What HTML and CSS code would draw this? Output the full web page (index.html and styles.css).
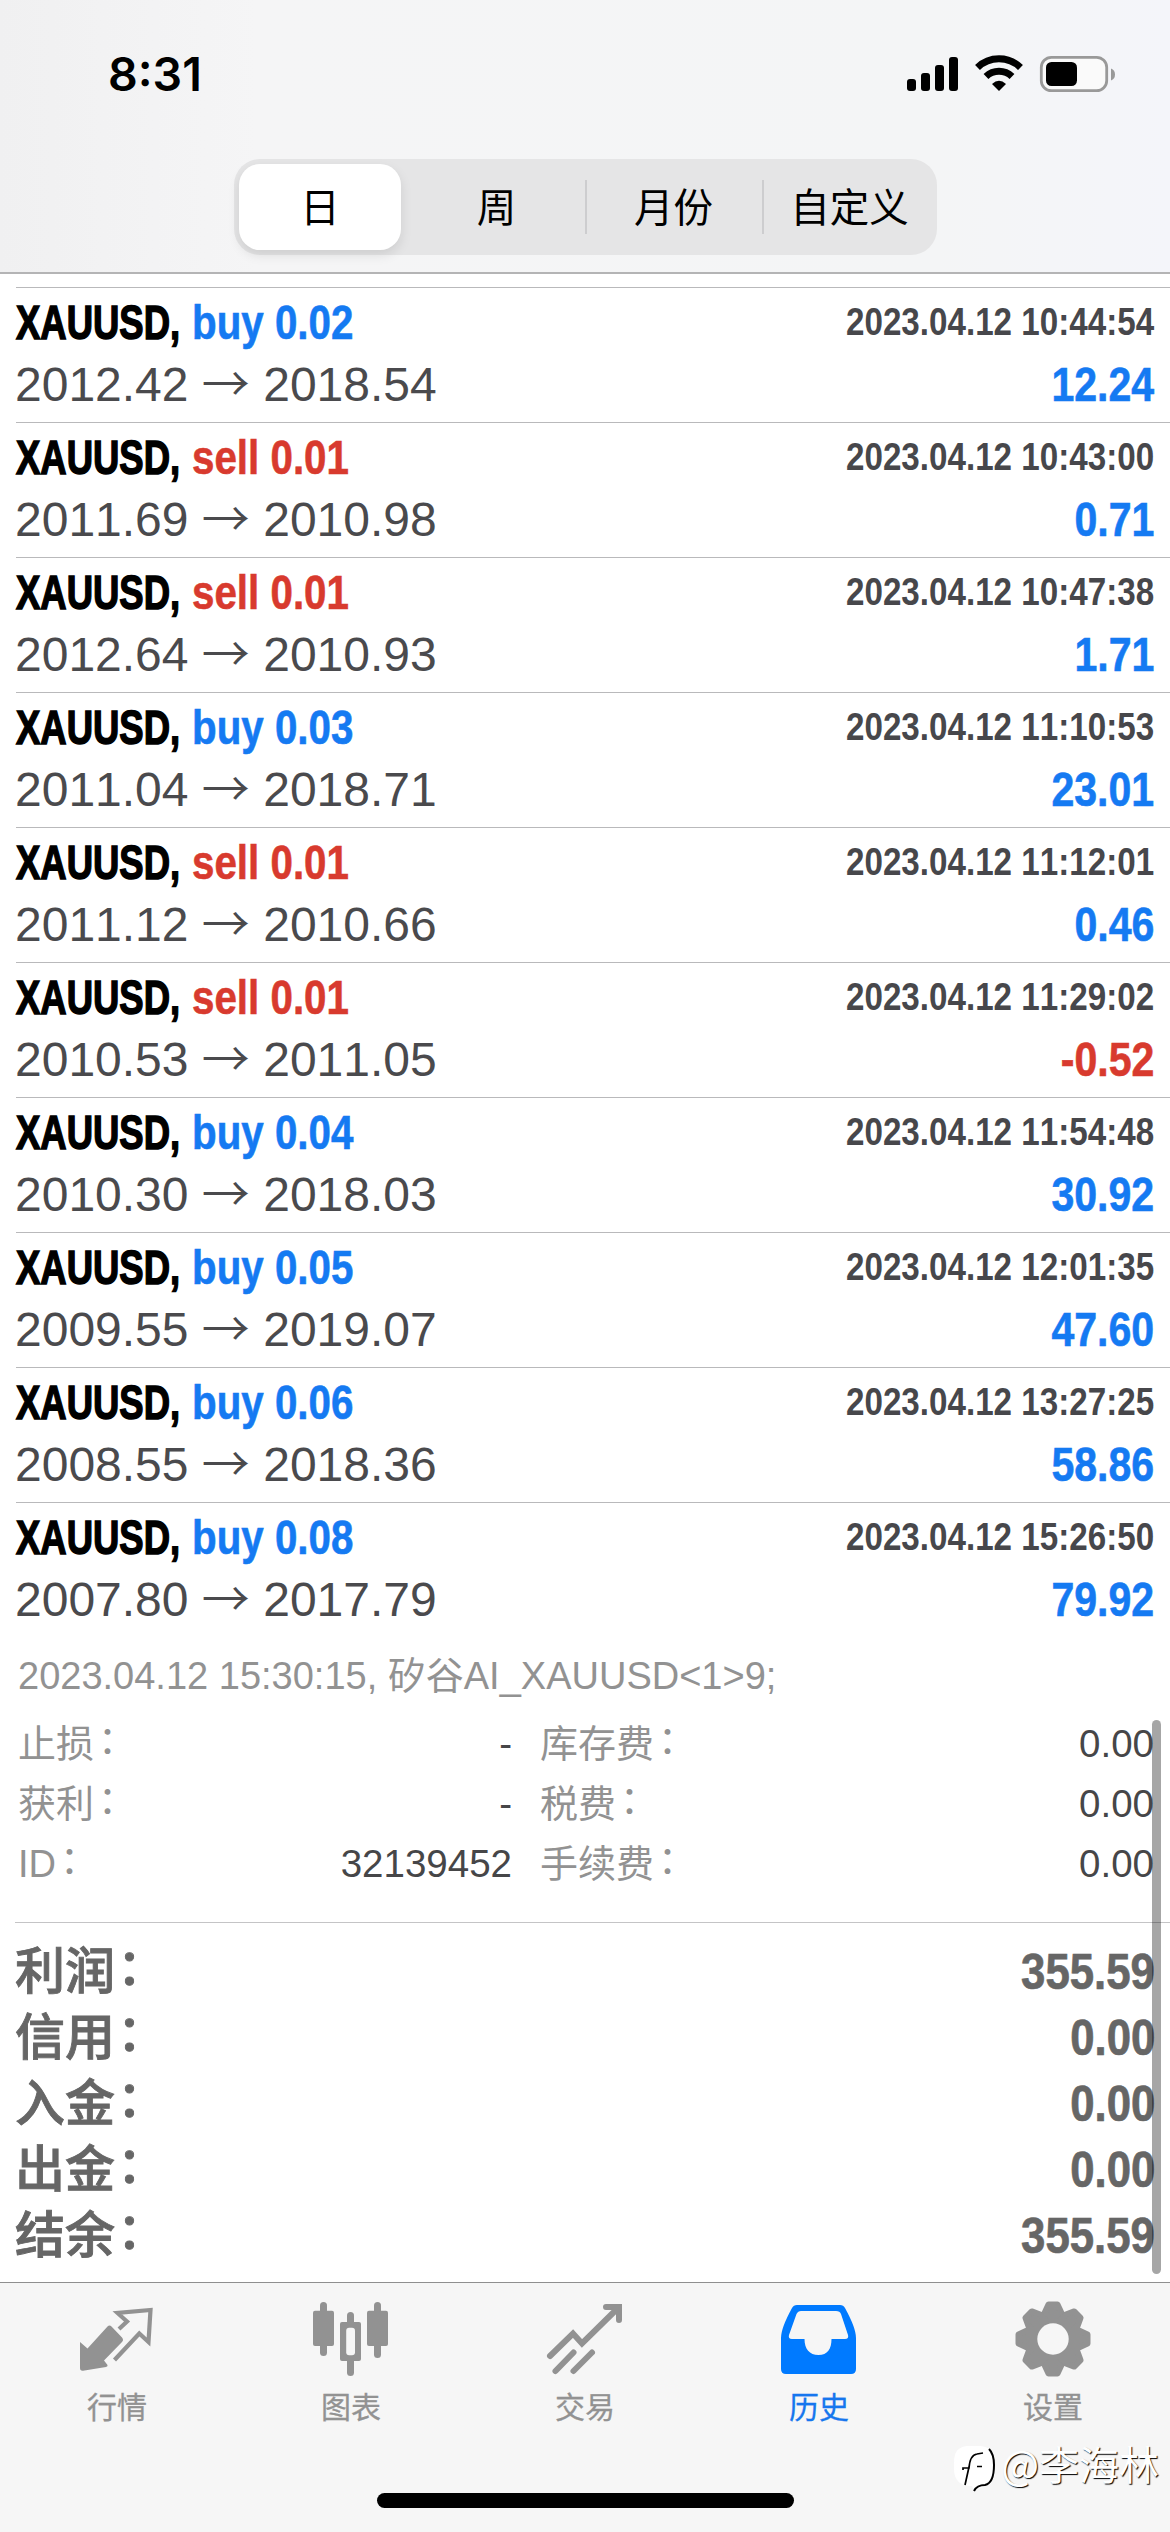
FILE: index.html
```html
<!DOCTYPE html>
<html lang="zh-CN">
<head>
<meta charset="utf-8">
<title>历史</title>
<link rel="stylesheet" href="styles.css">
</head>
<body>
<div class="screen">
  <header class="header">
    <div class="status">
      <span class="time">8:31</span>
      <svg class="status-icons" width="212" height="44" viewBox="905 52 212 44">
        <rect x="907" y="79" width="9" height="12" rx="3"/>
        <rect x="921" y="73" width="9" height="18" rx="3"/>
        <rect x="935" y="65" width="9" height="26" rx="3"/>
        <rect x="949" y="57" width="9" height="34" rx="3"/>
        <path d="M977.5 67.5 A31 31 0 0 1 1020.500 67.500" fill="none" stroke="#000" stroke-width="7"/>
        <path d="M986 76.500 A19 19 0 0 1 1012 76.500" fill="none" stroke="#000" stroke-width="7"/>
        <path d="M992 84 Q999 77.500 1006 84 L999 91z"/>
        <rect x="1041.300" y="57.300" width="65.400" height="33.400" rx="10" fill="#fafafa" stroke="#999" stroke-width="2.800"/>
        <rect x="1046" y="62" width="31" height="24" rx="5.500"/>
        <path d="M1111 68.500 Q1115 70 1115 74.500 Q1115 79 1111 80.500z" fill="#999"/>
      </svg>
    </div>
    <nav class="segments">
      <span class="segment active">日</span>
      <span class="segment">周</span>
      <span class="segment divided">月份</span>
      <span class="segment divided">自定义</span>
    </nav>
  </header>

  <main class="content">
    <ul class="deals">
      <li class="deal"><div class="line"><b class="symbol">XAUUSD,</b><b class="action buy">buy 0.02</b><b class="date">2023.04.12 10:44:54</b></div><div class="line"><span class="price">2012.42 <i>→</i> 2018.54</span><b class="profit buy">12.24</b></div></li>
      <li class="deal"><div class="line"><b class="symbol">XAUUSD,</b><b class="action sell">sell 0.01</b><b class="date">2023.04.12 10:43:00</b></div><div class="line"><span class="price">2011.69 <i>→</i> 2010.98</span><b class="profit buy">0.71</b></div></li>
      <li class="deal"><div class="line"><b class="symbol">XAUUSD,</b><b class="action sell">sell 0.01</b><b class="date">2023.04.12 10:47:38</b></div><div class="line"><span class="price">2012.64 <i>→</i> 2010.93</span><b class="profit buy">1.71</b></div></li>
      <li class="deal"><div class="line"><b class="symbol">XAUUSD,</b><b class="action buy">buy 0.03</b><b class="date">2023.04.12 11:10:53</b></div><div class="line"><span class="price">2011.04 <i>→</i> 2018.71</span><b class="profit buy">23.01</b></div></li>
      <li class="deal"><div class="line"><b class="symbol">XAUUSD,</b><b class="action sell">sell 0.01</b><b class="date">2023.04.12 11:12:01</b></div><div class="line"><span class="price">2011.12 <i>→</i> 2010.66</span><b class="profit buy">0.46</b></div></li>
      <li class="deal"><div class="line"><b class="symbol">XAUUSD,</b><b class="action sell">sell 0.01</b><b class="date">2023.04.12 11:29:02</b></div><div class="line"><span class="price">2010.53 <i>→</i> 2011.05</span><b class="profit sell">-0.52</b></div></li>
      <li class="deal"><div class="line"><b class="symbol">XAUUSD,</b><b class="action buy">buy 0.04</b><b class="date">2023.04.12 11:54:48</b></div><div class="line"><span class="price">2010.30 <i>→</i> 2018.03</span><b class="profit buy">30.92</b></div></li>
      <li class="deal"><div class="line"><b class="symbol">XAUUSD,</b><b class="action buy">buy 0.05</b><b class="date">2023.04.12 12:01:35</b></div><div class="line"><span class="price">2009.55 <i>→</i> 2019.07</span><b class="profit buy">47.60</b></div></li>
      <li class="deal"><div class="line"><b class="symbol">XAUUSD,</b><b class="action buy">buy 0.06</b><b class="date">2023.04.12 13:27:25</b></div><div class="line"><span class="price">2008.55 <i>→</i> 2018.36</span><b class="profit buy">58.86</b></div></li>
      <li class="deal"><div class="line"><b class="symbol">XAUUSD,</b><b class="action buy">buy 0.08</b><b class="date">2023.04.12 15:26:50</b></div><div class="line"><span class="price">2007.80 <i>→</i> 2017.79</span><b class="profit buy">79.92</b></div></li>
    </ul>

    <section class="details">
      <p class="comment">2023.04.12 15:30:15, 矽谷AI_XAUUSD&lt;1&gt;9;</p>
      <div class="detail-grid">
        <span>止损<i>：</i></span><span class="value">-</span><span>库存费<i>：</i></span><span class="value">0.00</span>
        <span>获利<i>：</i></span><span class="value">-</span><span>税费<i>：</i></span><span class="value">0.00</span>
        <span>ID<i>：</i></span><span class="value">32139452</span><span>手续费<i>：</i></span><span class="value">0.00</span>
      </div>
    </section>

    <section class="summary">
      <div class="total"><span>利润<i>：</i></span><b>355.59</b></div>
      <div class="total"><span>信用<i>：</i></span><b>0.00</b></div>
      <div class="total"><span>入金<i>：</i></span><b>0.00</b></div>
      <div class="total"><span>出金<i>：</i></span><b>0.00</b></div>
      <div class="total"><span>结余<i>：</i></span><b>355.59</b></div>
    </section>
    <div class="scrollbar"></div>
  </main>

  <footer class="tabbar">
    <nav class="tabs">
      <a class="tab">
        <svg width="78" height="78" viewBox="0 0 78 78">
          <path d="M2 42 L9.500 48.500 L29.500 26.500 Q31.500 24.500 33.500 26.500 L44 37.500 Q46 40 44 42 L26 60.500 L29.500 65 Q30 66.500 28 67 L5 70.700 Q2 71 2 68z" fill="#929292"/>
          <path d="M41 29 L49 21.500 L39.500 13 L72.500 10 L70.500 42 L61.300 33.500 L36.500 60" fill="none" stroke="#929292" stroke-width="4.200"/>
        </svg>
        <span>行情</span>
      </a>
      <a class="tab">
        <svg width="78" height="78" viewBox="312 2300 78 78" fill="#929292">
          <rect x="313" y="2310.700" width="21" height="35.300" rx="2"/><rect x="320" y="2302" width="7" height="54" rx="3.500"/>
          <rect x="367" y="2310.700" width="21" height="35.300" rx="2"/><rect x="374" y="2302" width="7" height="56" rx="3.500"/>
          <rect x="340" y="2322" width="21" height="39" rx="2"/><rect x="347" y="2312" width="7" height="64" rx="3.500"/>
          <rect x="346.200" y="2327.700" width="8.800" height="27.500" rx="3" fill="#f6f6f6"/>
        </svg>
        <span>图表</span>
      </a>
      <a class="tab">
        <svg width="78" height="78" viewBox="546 2300 78 78" fill="none" stroke="#929292" stroke-width="6" stroke-linecap="round">
          <path d="M550 2356 L573 2333.500 L582 2343.500 L618 2308 M606 2307 H619 V2320"/>
          <path d="M555.500 2371 L573.500 2352.500 M573.500 2371 L592 2352.500"/>
        </svg>
        <span>交易</span>
      </a>
      <a class="tab active">
        <svg width="78" height="78" viewBox="780 2300 78 78">
          <path fill="#007aff" fill-rule="evenodd" d="M797 2305 H840 Q843.500 2305 845 2308 Q856 2328 856 2338 V2369 Q856 2374 851 2374 H786 Q781 2374 781 2369 V2338 Q781 2328 792 2308 Q793.500 2305 797 2305z M801 2311 Q798 2311 796.500 2314 L789 2335 Q788 2339 792 2339 H804.500 C804.500 2349 809.500 2355 818.500 2355 C827.500 2355 831.500 2349 831.500 2339 H845 Q849 2339 848 2335 L841 2314 Q840 2311 836 2311z"/>
        </svg>
        <span>历史</span>
      </a>
      <a class="tab">
        <svg width="78" height="78" viewBox="-39 -39 78 78">
          <defs><path id="tooth" d="M-8 -27 L-4.500 -34.500 H4.500 L8 -27 L8 27 L4.500 34.500 H-4.500 L-8 27z"/></defs>
          <g fill="#929292" stroke="#929292" stroke-width="6" stroke-linejoin="round">
            <circle r="26.500"/><use href="#tooth"/><use href="#tooth" transform="rotate(45)"/><use href="#tooth" transform="rotate(90)"/><use href="#tooth" transform="rotate(135)"/>
          </g>
          <circle r="15.700" fill="#f6f6f6"/>
        </svg>
        <span>设置</span>
      </a>
    </nav>
    <div class="home-indicator"></div>
    <div class="watermark">
      <svg width="46" height="50" viewBox="946 2445 46 50">
        <path d="M961 2447 H974 Q989 2448 989 2465 V2471 Q989 2486 976 2488 L968 2492 L966 2487 Q948 2487 948 2470 V2463 Q948 2448 961 2447z" fill="#fff"/>
        <path d="M959 2486 L963 2468 M957 2471 V2469 H963 Q964 2456 971 2455 L977 2454 M971 2467.500 H976" fill="none" stroke="#000" stroke-width="1.700"/>
        <path d="M983 2450 Q988 2455 988 2466 Q988 2484 979 2486 Q971 2486 968 2492" fill="none" stroke="#000" stroke-width="2"/>
      </svg>
      <span>@李海林</span>
    </div>
  </footer>
</div>
</body>
</html>
```
FILE: styles.css
```css
* { box-sizing: border-box; }

body {
  margin: 0;
  background: #fff;
  font-family: "Liberation Sans", "Noto Sans CJK SC", sans-serif;
}

.screen {
  display: flex;
  flex-direction: column;
  width: 1170px;
  height: 2532px;
  overflow: hidden;
}

.header {
  height: 274px;
  border-bottom: 2px solid #b4b4b5;
  background: linear-gradient(90deg, #f0f0f1, #f5f5f6 22%, #f4f5f6 80%, #f4f5fa);
}

.status {
  display: flex;
  justify-content: space-between;
  align-items: center;
  height: 148px;
  padding: 0 53px 0 108px;
}

.time {
  font: 600 46.500px/50px Inter, sans-serif;
}

.segments {
  display: grid;
  grid-template-columns: 174px 177px 177px 175px;
  width: 703px;
  height: 96px;
  margin: 11px 0 0 234px;
  border-radius: 26px;
  background: #e5e5e6;
}

.segment {
  display: flex;
  align-items: center;
  justify-content: center;
  padding-bottom: 5px;
  font: 400 39.500px/50px "Noto Sans CJK SC", sans-serif;
}

.segment.active {
  width: 162px;
  height: 86px;
  margin: 5px;
  border-radius: 21px;
  background: #fff;
  box-shadow: 0 5px 12px rgba(0, 0, 0, .1);
}

.divided {
  background: linear-gradient(#cdcdcf, #cdcdcf) 0 50% / 2px 54px no-repeat;
}

.content {
  position: relative;
  height: 2008px;
  padding-top: 13px;
}

.deals {
  margin: 0;
  padding: 0;
  list-style: none;
}

.deal {
  height: 135px;
  margin-left: 16px;
  padding: 4px 16px 0 0;
  border-top: 1px solid #b9b9bb;
}

.line {
  display: flex;
  height: 62px;
  font-size: 48px;
  font-kerning: none;
  line-height: 62px;
  white-space: nowrap;
}

.symbol {
  width: 176px;
  color: #000;
  font-kerning: normal;
  -webkit-text-stroke: 1.5px;
  transform: scaleX(.76);
  transform-origin: left;
}

.action {
  -webkit-text-stroke: .6px;
  transform: scaleX(.84);
  transform-origin: left;
}

.date {
  margin-left: auto;
  color: #47474b;
  font-size: 39px;
  line-height: 59px;
  transform: scaleX(.851);
  transform-origin: right;
}

.buy { color: #157af2; }
.sell { color: #d83a2e; }

.price {
  margin-left: -1px;
  color: #4a4a4d;
}

.price i {
  font-family: "Noto Sans CJK SC", sans-serif;
  font-style: normal;
  font-weight: 350;
  line-height: 0;
}

.profit {
  margin-left: auto;
  -webkit-text-stroke: .6px;
  transform: scaleX(.855);
  transform-origin: right;
}

.details {
  height: 285px;
  padding: 9px 16px 0 18px;
  color: #929292;
  font-size: 38px;
  font-kerning: none;
  line-height: 60px;
}

.comment {
  margin: 0 0 8px;
}

.detail-grid {
  display: grid;
  grid-template-columns: 180px 314px 200px 1fr;
}

.detail-grid span:nth-child(4n + 3) {
  padding-left: 28px;
}

.detail-grid .value {
  color: #464648;
  font-size: 38.500px;
  text-align: right;
}

/* full-width colons sit centred on the characters */
.detail-grid i,
.total i {
  position: relative;
  top: -4px;
  left: 4px;
  font-style: normal;
}

.summary {
  margin-left: 15px;
  padding: 16px 15px 0 0;
  border-top: 1px solid #c4c4c6;
}

.total {
  display: flex;
  justify-content: space-between;
  height: 66px;
  color: #666;
  font-size: 50px;
  font-weight: 500;
  line-height: 66px;
}

.total span {
  -webkit-text-stroke: .9px;
}

.total i { left: 2px; }

.total b {
  -webkit-text-stroke: .7px;
  transform: scaleX(.875);
  transform-origin: right;
}

.scrollbar {
  position: absolute;
  top: 1446px;
  right: 9px;
  width: 9px;
  height: 554px;
  border-radius: 5px;
  background: rgba(0, 0, 0, .35);
}

.tabbar {
  position: relative;
  height: 250px;
  border-top: 1px solid #8f8f8f;
  background: #f6f6f6;
}

.tabs {
  display: grid;
  grid-template-columns: repeat(5, 1fr);
  padding-top: 17px;
}

.tab {
  display: flex;
  flex-direction: column;
  align-items: center;
  color: #929292;
  font: 400 30px/40px "Noto Sans CJK SC", sans-serif;
  -webkit-text-stroke: .3px;
}

.tab span { margin-top: 7px; }
.tab.active { color: #1676ee; }

.home-indicator {
  position: absolute;
  left: 377px;
  bottom: 24px;
  width: 417px;
  height: 15px;
  border-radius: 8px;
  background: #000;
}

.watermark {
  position: absolute;
  right: 11px;
  bottom: 38px;
  display: flex;
  align-items: center;
  gap: 3px;
  color: #fff;
  font: 400 40px/52px "Noto Sans CJK SC", sans-serif;
  text-shadow: 1px 1px 1px #000;
}

.watermark span { margin-top: -13px; }
```
